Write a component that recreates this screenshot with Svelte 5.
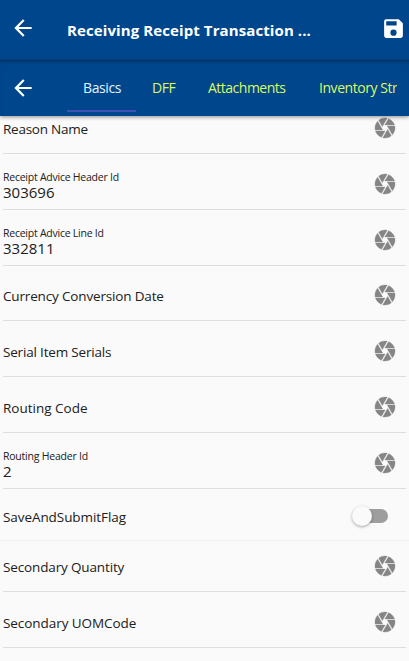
<script>
  const tabs = [
    { name: 'Basics', width: 69, spacing: -0.4 },
    { name: 'DFF', width: 56, spacing: -0.4 },
    { name: 'Attachments', width: 111, spacing: -0.45 },
    { name: 'Inventory Str', width: 110, spacing: -0.45 }
  ];
  const rows = [
    { label: 'Reason Name', height: 56, spacing: -0.25 },
    { label: 'Receipt Advice Header Id', value: '303696', height: 56, spacing: -0.24 },
    { label: 'Receipt Advice Line Id', value: '332811', height: 56, spacing: -0.24 },
    { label: 'Currency Conversion Date', compact: true, height: 55, spacing: -0.16 },
    { label: 'Serial Item Serials', height: 56, spacing: -0.18 },
    { label: 'Routing Code', height: 56, spacing: 0 },
    { label: 'Routing Header Id', value: '2', height: 56, spacing: -0.22 },
    { label: 'SaveAndSubmitFlag', toggle: true, height: 52, spacing: -0.07 },
    { label: 'Secondary Quantity', compact: true, height: 51, spacing: -0.14 },
    { label: 'Secondary UOMCode', height: 56, spacing: -0.06 }
  ];
</script>

{#snippet back()}
  <svg class="back" viewBox="0 0 24 24"><path d="M20 11H7.83l5.59-5.59L12 4l-8 8 8 8 1.41-1.41L7.83 13H20z" /></svg>
{/snippet}

<div class="screen">
  <header>
    {@render back()}
    <h1>Receiving Receipt Transaction ...</h1>
    <svg class="save" viewBox="0 0 24 24"><path d="M17 3H5a2 2 0 0 0-2 2v14a2 2 0 0 0 2 2h14a2 2 0 0 0 2-2V7zm-5 16a3 3 0 1 1 0-6 3 3 0 0 1 0 6zm3-10H5V5h10z" /></svg>
  </header>
  <nav>
    {@render back()}
    <div class="tabs">
      {#each tabs as tab, i}
        <span class="tab" class:active={i === 0} style="width: {tab.width}px; letter-spacing: {i === 2 ? -0.5 : tab.spacing}px">{tab.name}</span>
      {/each}
    </div>
  </nav>
  <main>
    <div class="list">
      {#each rows as row}
        <div class="row" class:flag={row.toggle} class:compact={row.compact} style="height: {row.height}px">
          {#if row.value}
            <div class="field">
              <span class="small" style="letter-spacing: {row.spacing}px">{row.label}</span>
              <span class="value">{row.value}</span>
            </div>
          {:else}
            <span class="label" style="letter-spacing: {row.spacing}px">{row.label}</span>
          {/if}
          {#if row.toggle}
            <span class="switch"><i></i></span>
          {:else}
            <svg class="camera" viewBox="0 0 24 24"><path d="M9.4 10.5l4.77-8.26C13.47 2.09 12.75 2 12 2c-2.4 0-4.6.85-6.32 2.25l3.66 6.35.06-.1zM21.54 9c-.92-2.92-3.15-5.26-6-6.34L11.88 9h9.66zm.26 1h-7.49l.29.5 4.76 8.25C21 16.97 22 14.61 22 12c0-.69-.07-1.35-.2-2zM8.54 12l-3.9-6.75C3.01 7.03 2 9.39 2 12c0 .69.07 1.35.2 2h7.49l-1.15-2zm-6.08 3c.92 2.92 3.15 5.26 6 6.34L12.12 15H2.46zm11.27 0l-3.9 6.76c.7.15 1.42.24 2.17.24 2.4 0 4.6-.85 6.32-2.25l-3.66-6.35-.93 1.6z" /></svg>
          {/if}
        </div>
      {/each}
    </div>
  </main>
</div>

<style>
  :global(body) { margin: 0; }
  .screen {
    display: flex;
    flex-direction: column;
    height: 661px;
    overflow: hidden;
    background: #fafafa;
    color: #202020;
    font-family: "Segoe UI", "Open Sans", "Noto Sans", sans-serif;
  }
  svg { display: block; flex: none; }
  header, nav {
    display: flex;
    align-items: center;
    box-sizing: border-box;
    flex: none;
    background: #00468c;
    fill: #fff;
    color: #fff;
  }
  header {
    height: 60px;
    padding: 0 3px 4px 10px;
  }
  .back { width: 26px; height: 26px; }
  h1 {
    flex: 1;
    margin: 3px 0 0 31px;
    font-size: 15px;
    line-height: 24px;
    font-weight: 700;
    white-space: nowrap;
    letter-spacing: 0.1px;
  }
  .save { width: 25px; height: 25px; }
  nav {
    height: 56px;
    padding: 0 12px 0 10px;
    box-shadow: 0 1px 4px rgba(0, 0, 0, 0.45), inset 0 4px 4px -3px rgba(0, 0, 0, 0.4);
    z-index: 1;
  }
  .tabs {
    display: flex;
    flex: 1;
    min-width: 0;
    height: 56px;
    margin-left: 31px;
    overflow: hidden;
  }
  .tab {
    flex: none;
    box-sizing: border-box;
    height: 52px;
    padding: 0 16px;
    font-size: 14px;
    line-height: 56px;
    color: #d9fb5e;
    white-space: nowrap;
  }
  .active { color: #e4f4ff; border-bottom: 2px solid #3f51b5; }
  main { flex: 1; overflow: hidden; }
  .list { margin: -18px 3px 0; }
  .row {
    display: flex;
    align-items: center;
    justify-content: space-between;
    box-sizing: border-box;
    padding: 5px 9px 0 0;
    border-bottom: 1px solid #dedede;
  }
  .label { font-size: 13.5px; line-height: 20px; padding-top: 1px; }
  .field { display: flex; flex-direction: column; padding-top: 1px; }
  .small { font-size: 10.5px; line-height: 15px; }
  .value { font-size: 15px; line-height: 15px; }
  .camera {
    width: 24px;
    height: 24px;
    fill: #858585;
    stroke: #858585;
    stroke-width: 0.35;
  }
  .compact { padding-top: 4px; }
  .compact:nth-child(9) { padding-top: 0; }
  .flag {
    margin: 0 -3px;
    padding: 3px 21px 0 3px;
    border-bottom-color: #efefef;
  }
  .switch {
    display: flex;
    align-items: center;
    width: 34px;
    height: 14px;
    border-radius: 7px;
    background: #9e9e9e;
  }
  .switch i {
    width: 20px;
    height: 20px;
    margin-left: -2px;
    border-radius: 50%;
    background: #fafafa;
    box-shadow: 0 1px 3px rgba(0, 0, 0, 0.35);
  }
</style>
